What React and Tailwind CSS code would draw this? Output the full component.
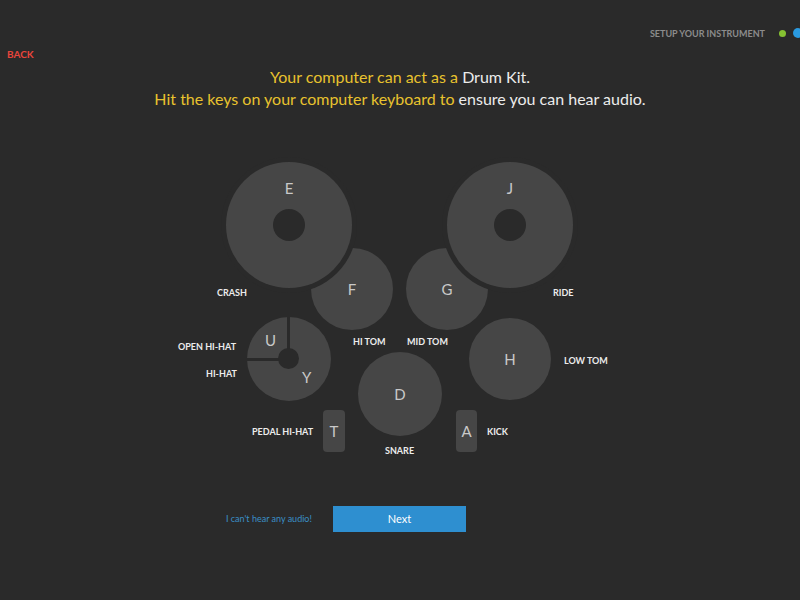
import React from 'react';

// Pads are placed on a free canvas; coordinates are the pad centres.
const cymbals = [
  { key: 'E', x: 289, y: 75 },
  { key: 'J', x: 510, y: 75 },
];

const drums = [
  { key: 'F', x: 352, y: 139, r: 41 },
  { key: 'G', x: 447, y: 139, r: 41 },
  { key: 'H', x: 510, y: 209, r: 41 },
  { key: 'D', x: 400, y: 244, r: 42 },
];

const labels = [
  { text: 'CRASH', x: 217, y: 142 },
  { text: 'RIDE', x: 553, y: 142 },
  { text: 'OPEN HI-HAT', x: 178, y: 196 },
  { text: 'HI-HAT', x: 206, y: 223 },
  { text: 'HI TOM', x: 353, y: 191 },
  { text: 'MID TOM', x: 407, y: 191 },
  { text: 'LOW TOM', x: 564, y: 210 },
  { text: 'PEDAL HI-HAT', x: 252, y: 281 },
  { text: 'SNARE', x: 385, y: 300 },
  { text: 'KICK', x: 487, y: 281 },
];

function Pad({ x, y, r, children, className = '' }) {
  return (
    <div
      className={`absolute flex items-center justify-center rounded-full bg-[#464646] ${className}`}
      style={{ left: x - r, top: y - r, width: r * 2, height: r * 2 }}
    >
      {children}
    </div>
  );
}

function Key({ children }) {
  return <span className="text-[15px] leading-none text-[#c9c9c9]">{children}</span>;
}

function DrumKit() {
  return (
    <div className="relative h-[320px] w-full">
      {drums.map((d) => (
        <Pad key={d.key} x={d.x} y={d.y} r={d.r}>
          <Key>{d.key}</Key>
        </Pad>
      ))}

      {/* cymbals sit on top of the toms with a dark rim cutting into them */}
      {cymbals.map((c) => (
        <div
          key={c.key}
          className="absolute h-[126px] w-[126px] rounded-full bg-[#464646] shadow-[0_0_0_5px_#2a2a2a]"
          style={{ left: c.x - 63, top: c.y - 63 }}
        >
          <span className="absolute left-1/2 top-[19px] -translate-x-1/2 text-[15px] leading-none text-[#c9c9c9]">
            {c.key}
          </span>
          <div className="absolute left-[47px] top-[47px] h-[32px] w-[32px] rounded-full bg-[#2a2a2a]" />
        </div>
      ))}

      {/* hi-hat: closed (Y) and open (U) share one pad */}
      <div className="absolute left-[247px] top-[167px] h-[84px] w-[84px] rounded-full bg-[#464646]">
        <div className="absolute left-[40px] top-0 h-[42px] w-[3px] bg-[#2a2a2a]" />
        <div className="absolute left-0 top-[41px] h-[3px] w-[42px] bg-[#2a2a2a]" />
        <div className="absolute left-[31px] top-[31px] h-[21px] w-[21px] rounded-full bg-[#2a2a2a]" />
        <span className="absolute left-[18px] top-[16px] text-[15px] leading-none text-[#c9c9c9]">U</span>
        <span className="absolute left-[55px] top-[53px] text-[15px] leading-none text-[#c9c9c9]">Y</span>
      </div>

      {/* pedals */}
      <div className="absolute left-[323px] top-[260px] flex h-[42px] w-[22px] items-center justify-center rounded-[4px] bg-[#464646]">
        <Key>T</Key>
      </div>
      <div className="absolute left-[456px] top-[260px] flex h-[42px] w-[21px] items-center justify-center rounded-[4px] bg-[#464646]">
        <Key>A</Key>
      </div>

      {labels.map((l) => (
        <span
          key={l.text}
          className="absolute -translate-y-1/2 whitespace-nowrap text-[9px] font-bold leading-none text-[#ececec]"
          style={{ left: l.x, top: l.y }}
        >
          {l.text}
        </span>
      ))}
    </div>
  );
}

export default function App() {
  return (
    <div className="flex h-[600px] w-full flex-col overflow-hidden bg-[#2a2a2a] pt-[27px] font-['Lato',sans-serif]">
      <div className="flex h-[12px] items-center justify-end">
        <span className="text-[9px] font-bold leading-none text-[#8c8c8c]">SETUP YOUR INSTRUMENT</span>
        <span className="ml-[14px] h-[7px] w-[7px] rounded-full bg-[#86c232]" />
        <span className="ml-[7px] mr-[-3px] h-[10px] w-[10px] rounded-full bg-[#2a9ae0]" />
      </div>

      <div className="mt-[10px] flex h-[9px] items-center px-[7px]">
        <button className="text-[10px] font-bold leading-none text-[#e8453c]">BACK</button>
      </div>

      <div className="mt-[8px] text-center text-[16px] leading-[22px] text-[#e8c22e]">
        <p>
          Your computer can act as a <span className="text-[#ececec]">Drum Kit.</span>
        </p>
        <p>
          Hit the keys on your computer keyboard to{' '}
          <span className="text-[#ececec]">ensure you can hear audio.</span>
        </p>
      </div>

      <div className="mt-[40px]">
        <DrumKit />
      </div>

      <div className="mt-[36px] flex items-center">
        <a className="ml-[226px] w-[107px] text-[9px] text-[#3a8fc6]">I can't hear any audio!</a>
        <button className="h-[26px] w-[133px] bg-[#2e8fd0] text-[11px] text-white">Next</button>
      </div>
    </div>
  );
}
